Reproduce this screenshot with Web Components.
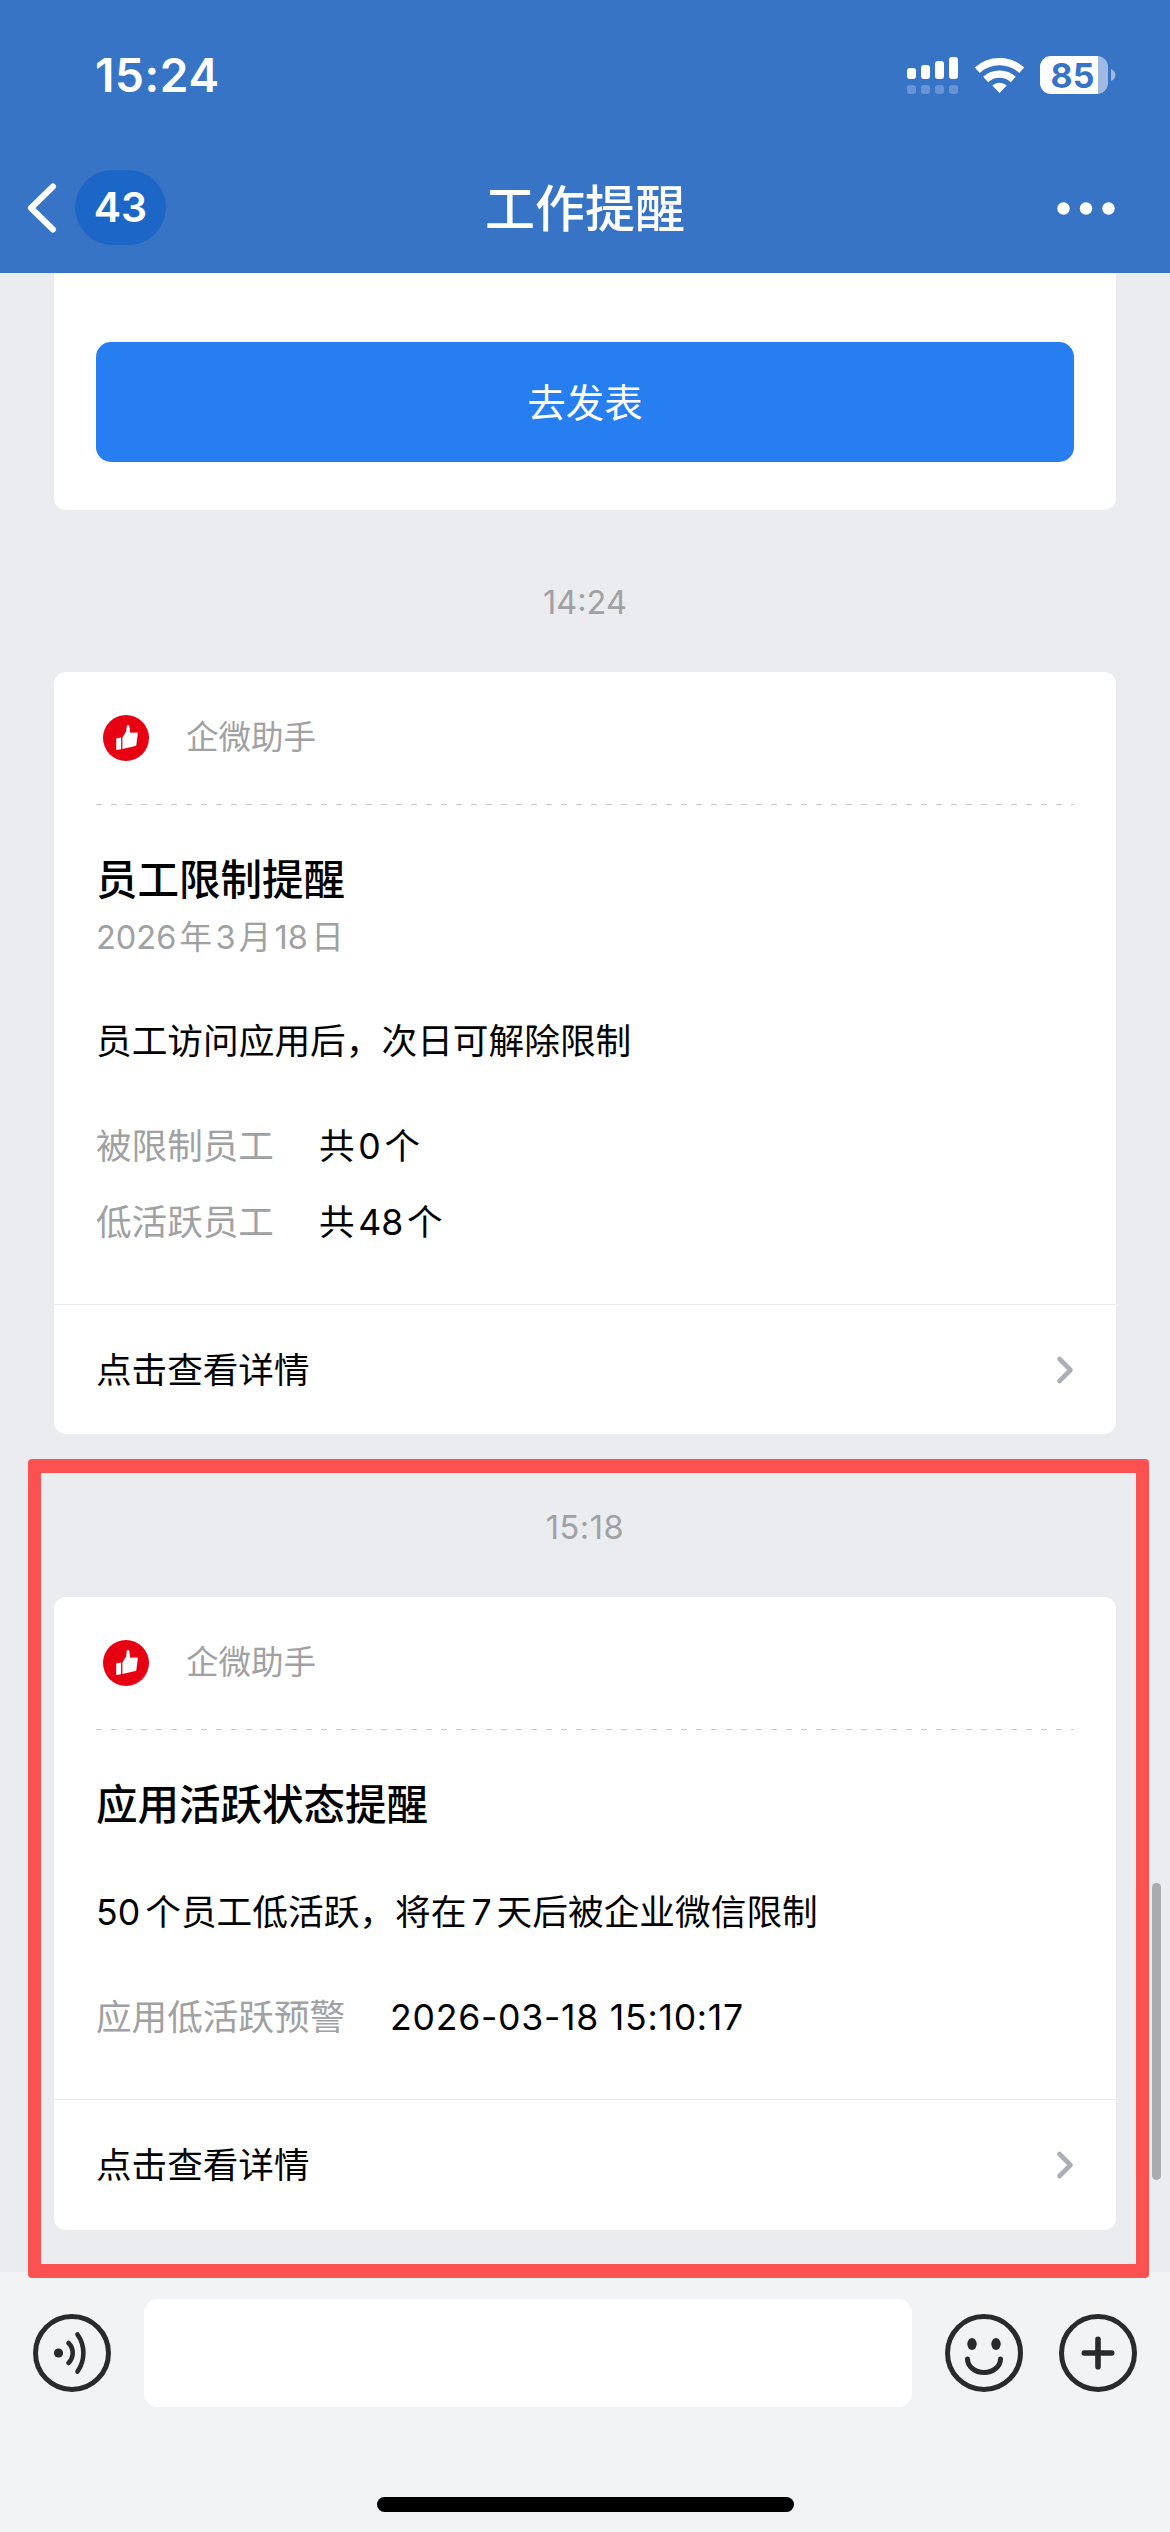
<!DOCTYPE html>
<html lang="zh-CN">
<head>
<meta charset="utf-8">
<title>工作提醒</title>
<style>
html,body{margin:0;padding:0}
body{width:1170px;height:2532px;overflow:hidden;background:#ebecf0;font-family:Inter,"Noto Sans CJK SC",sans-serif;color:#000}
</style>
</head>
<body>
<chat-app></chat-app>
<script>
const define = (name, html) => {
  const t = document.createElement('template');
  t.innerHTML = html;
  customElements.define(name, class extends HTMLElement {
    constructor() {
      super();
      this.attachShadow({ mode: 'open' }).appendChild(t.content.cloneNode(true));
    }
  });
};

define('status-bar', `
<style>
:host{display:flex;height:149px;box-sizing:border-box;padding:0 54px 0 95px;align-items:center;justify-content:space-between;color:#fff}
.time{font-size:46px;font-weight:600;line-height:50px;letter-spacing:.6px}
.right{display:flex;align-items:center}
svg{display:block}
.wifi{margin-left:16px}
.battery{display:flex;align-items:center;margin-left:15px}
.cell{width:68px;height:38px;border-radius:11px;box-sizing:border-box;padding-right:3px;background:linear-gradient(90deg,#fff 58px,#a0b9e2 58px);color:#3874c6;font-size:34px;font-weight:650;line-height:39px;text-align:center}
.nub{margin-left:3px}
</style>
<span class="time">15:24</span>
<div class="right">
<svg width="52" height="38" viewBox="907 55 52 38"><g fill="#fff"><rect x="907" y="67" width="9" height="11" rx="3"/><rect x="921" y="64" width="9" height="14" rx="3"/><rect x="935" y="60" width="9" height="18" rx="3"/><rect x="949" y="56" width="9" height="22" rx="3"/></g><g fill="#6894d5"><rect x="907" y="84" width="9" height="9" rx="3"/><rect x="921" y="84" width="9" height="9" rx="3"/><rect x="935" y="84" width="9" height="9" rx="3"/><rect x="949" y="84" width="9" height="9" rx="3"/></g></svg>
<svg class="wifi" width="50" height="38" viewBox="975 54 50 38"><g fill="none" stroke="#fff" stroke-width="7.4"><path d="M977.3 68.2a33 33 0 0 1 44.4 0"/><path d="M985.7 77.5a20.5 20.5 0 0 1 27.6 0"/></g><path d="M999.5 91l-7.2-7.400a10.600 10.600 0 0 1 14.400 0z" fill="#fff"/></svg>
<div class="battery"><div class="cell">85</div><svg class="nub" width="5" height="12" viewBox="0 0 5 12"><path d="M0 0c2.600 1 4.400 3.300 4.400 6s-1.800 5-4.400 6z" fill="#a0b9e2"/></svg></div>
</div>`);

define('nav-bar', `
<style>
:host{display:grid;grid-template-columns:1fr auto 1fr;align-items:center;height:117px;padding-bottom:7px;box-sizing:content-box;color:#fff}
.back{display:flex;align-items:center;padding-left:26px}
.badge{margin-left:17px;width:91px;height:75px;border-radius:37.5px;background:#1c66c8;font-size:41px;font-weight:600;line-height:75px;text-align:center}
.title{font-size:50px;font-weight:500;line-height:60px;padding-top:3px}
.more{justify-self:end;margin-right:54px}
svg{display:block}
</style>
<div class="back"><svg width="32" height="54" viewBox="0 0 32 54"><path d="M27 5.500L5 27l22 21.500" fill="none" stroke="#fff" stroke-width="6" stroke-linecap="round" stroke-linejoin="round"/></svg><span class="badge">43</span></div>
<span class="title">工作提醒</span>
<svg class="more" width="60" height="14" viewBox="0 0 60 14" fill="#fff"><circle cx="7.500" cy="7.500" r="6.200"/><circle cx="30" cy="7.500" r="6.200"/><circle cx="52.500" cy="7.500" r="6.200"/></svg>`);

define('time-stamp', `
<style>:host{display:block;text-align:center;font-size:32.500px;line-height:40px;color:#a0a1a3}</style><slot></slot>`);

define('action-card', `
<style>
:host{display:block;background:#fff;border-radius:0 0 12px 12px;padding:69px 42px 48px}
button{display:block;width:100%;height:120px;border:0;border-radius:15px;background:#277ef1;color:#fff;font:400 38.500px/118px Inter,"Noto Sans CJK SC",sans-serif;padding:2px 0 0}
</style><button><slot></slot></button>`);

define('like-avatar', `
<style>:host{display:block;width:46px;height:46px}svg{display:block}</style>
<svg width="46" height="46" viewBox="0 0 46 46"><circle cx="23" cy="23" r="23" fill="#e60012"/><path d="M13.200 23.500l4.900-1v11.700l-4.900.9zM19.400 22.500l3.600-5.800.8-5.600q.2-1 1.200-1t1.300 1l1 6.600 6.500-.2q1.100.1 1 1.300l-1.500 11.400q-.1.700-.9.900l-13 3z" fill="#fff"/></svg>`);

define('field-row', `
<style>:host{display:flex;gap:45px;font-size:35.600px;line-height:46px;white-space:nowrap}
.k{color:#a0a1a3}</style><span class="k"><slot name="label"></slot></span><span><slot></slot></span>`);

define('notice-card', `
<style>
:host{display:flex;flex-direction:column;background:#fff;border-radius:12px}
.head{display:flex;align-items:center;height:132px;padding-left:49px;gap:37px;font-size:32.500px;line-height:40px;color:#a0a1a3}
.dash{height:1px;margin:0 42px;background:repeating-linear-gradient(90deg,#c8c8c8 0 6px,transparent 6px 15px)}
.body{padding:48px 42px 0;flex:1}
.title{font-size:41.500px;font-weight:500;line-height:54px}
.date{font-size:32.500px;line-height:40px;color:#a0a1a3;margin-top:11px}
.date ::slotted(*){display:block}
.desc{font-size:35.700px;line-height:46px}
.rows{display:flex;flex-direction:column;gap:30px;margin-top:60px}
.foot{display:flex;align-items:center;justify-content:space-between;border-top:1px solid #ebebed;height:var(--foot-height,129px);padding:0 42px;font-size:35.600px;line-height:46px}
.foot span{padding-top:2px}
svg{display:block}
</style>
<div class="head"><like-avatar></like-avatar><span>企微助手</span></div>
<div class="dash"></div>
<div class="body"><div class="title"><slot name="title"></slot></div><div class="date"><slot name="date"></slot></div><div class="desc"><slot name="desc"></slot></div><div class="rows"><slot></slot></div></div>
<div class="foot"><span>点击查看详情</span><svg width="20" height="30" viewBox="0 0 20 30"><path d="M5.500 4l11 11-11 11" fill="none" stroke="#abb0b8" stroke-width="4.600" stroke-linecap="round" stroke-linejoin="round"/></svg></div>`);

define('input-bar', `
<style>
:host{display:flex;flex-direction:column;align-items:center;justify-content:space-between;height:260px;box-sizing:border-box;padding:27px 0 20px;background:#f1f3f5}
.row{display:flex;align-items:center;width:100%;box-sizing:border-box;padding:0 33px}
.field{flex:1;height:108px;border-radius:14px;background:#fff;margin:0 33px}
.plus{margin-left:36px}
svg{display:block}
.home{width:417px;height:15px;border-radius:8px;background:#000}
</style>
<div class="row">
<svg width="78" height="78" viewBox="0 0 78 78" fill="none" stroke="#272b2e" stroke-linecap="round"><circle cx="39" cy="39" r="36.500" stroke-width="5"/><circle cx="25.500" cy="39" r="4.600" fill="#272b2e" stroke="none"/><path d="M35.500 29a14 14 0 0 1 0 20M44.500 20.500a32 32 0 0 1 0 37" stroke-width="4.600"/></svg>
<div class="field"></div>
<svg width="78" height="78" viewBox="0 0 78 78" fill="none" stroke="#272b2e" stroke-linecap="round"><circle cx="39" cy="39" r="36.500" stroke-width="5"/><ellipse cx="27" cy="30" rx="4.700" ry="6" fill="#272b2e" stroke="none"/><ellipse cx="51" cy="30" rx="4.700" ry="6" fill="#272b2e" stroke="none"/><path d="M22.500 45a16.500 13.500 0 0 0 33 0" stroke-width="5"/></svg>
<svg class="plus" width="78" height="78" viewBox="0 0 78 78" fill="none" stroke="#272b2e" stroke-linecap="round"><circle cx="39" cy="39" r="36.500" stroke-width="5"/><path d="M25.300 39H52.700M39 25.300V52.700" stroke-width="5.600"/></svg>
</div>
<div class="home"></div>`);

define('chat-app', `
<style>
:host{display:flex;flex-direction:column;width:1170px;height:2532px;position:relative;background:#ebecf0;text-autospace:no-autospace}
header{height:273px;background:#3874c6}
main{flex:1;padding:0 54px}
time-stamp.a{margin:73px 0 49px}
time-stamp.b{margin:74px 0 49px;letter-spacing:.6px}
.one{height:762px}
.two{height:633px;--foot-height:130px}
i{font-style:normal;margin:0 3.800px}
.day i{margin:0 3.300px}
.wide i{margin:0 5px}
.day i.l,.wide i.l{margin-left:0}
.stamp{letter-spacing:.75px}
.mark{position:absolute;left:28px;top:1459px;width:1095px;height:791px;border:solid #fb5251;border-width:14px 13px;border-radius:4px}
.scroll{position:absolute;left:1152px;top:1883px;width:9px;height:297px;border-radius:5px;background:#ababac}
</style>
<header><status-bar></status-bar><nav-bar></nav-bar></header>
<main>
<action-card>去发表</action-card>
<time-stamp class="a">14:24</time-stamp>
<notice-card class="one"><span slot="title">员工限制提醒</span><span slot="date" class="day" style="margin-bottom:60px"><i class="l">2026</i>年<i>3</i>月<i>18</i>日</span><span slot="desc">员工访问应用后，次日可解除限制</span>
<field-row><span slot="label">被限制员工</span>共<i>0</i>个</field-row><field-row><span slot="label">低活跃员工</span>共<i>48</i>个</field-row></notice-card>
<time-stamp class="b">15:18</time-stamp>
<notice-card class="two"><span slot="title">应用活跃状态提醒</span><span slot="date" style="height:46px"></span><span slot="desc" class="wide"><i class="l">50</i>个员工低活跃，将在<i>7</i>天后被企业微信限制</span>
<field-row><span slot="label">应用低活跃预警</span><span class="stamp">2026-03-18 15:10:17</span></field-row></notice-card>
</main>
<input-bar></input-bar>
<div class="scroll"></div>
<div class="mark"></div>`);
</script>
</body>
</html>
